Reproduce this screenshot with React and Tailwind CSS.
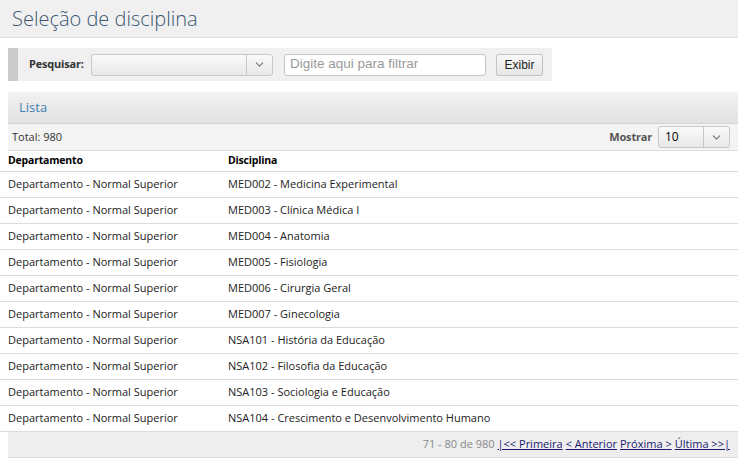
import { ChevronDown } from "lucide-react";

const rows = [
  "MED002 - Medicina Experimental",
  "MED003 - Clínica Médica I",
  "MED004 - Anatomia",
  "MED005 - Fisiologia",
  "MED006 - Cirurgia Geral",
  "MED007 - Ginecologia",
  "NSA101 - História da Educação",
  "NSA102 - Filosofia da Educação",
  "NSA103 - Sociologia e Educação",
  "NSA104 - Crescimento e Desenvolvimento Humano",
];

const sans = "font-['Open_Sans','Noto_Sans',sans-serif]";
const arial = "font-['Liberation_Sans',Arial,sans-serif]";

function SelectBox({ value, className }) {
  return (
    <div
      className={`flex h-[22px] items-stretch rounded-[3px] border border-[#c8c8c8] bg-gradient-to-b from-[#fafafa] to-[#e8e8e8] ${className}`}
    >
      <span className="flex flex-1 items-center px-1.5 text-[12px] text-black">
        {value}
      </span>
      <span className="flex w-[26px] items-center justify-center border-l border-[#c8c8c8] text-[#777]">
        <ChevronDown size={13} strokeWidth={2} />
      </span>
    </div>
  );
}

export default function App() {
  return (
    <div className={`min-h-screen bg-white text-[#222] ${sans}`}>
      <header className="flex h-[38px] items-center border-b border-[#dedede] bg-[#f0f0f0] px-3">
        <h1 className="text-[20px] font-light text-[#3c5670]">
          Seleção de disciplina
        </h1>
      </header>

      <div className="px-2 pt-[10px]">
        <div className="flex h-[33px] w-[544px] items-center bg-[#f0f0f0]">
          <span className="h-full w-[10px] bg-[#cbcbcb]" />
          <span className="ml-[11px] w-[52px] text-[11px] font-bold tracking-[-0.2px] text-[#333]">
            Pesquisar:
          </span>
          <SelectBox value="" className="ml-[10px] w-[182px]" />
          <div
            className={`ml-[11px] flex h-[22px] w-[202px] items-center rounded-[3px] border border-[#c4c4c4] bg-white px-[5px] text-[13.5px] text-[#999] ${arial}`}
          >
            Digite aqui para filtrar
          </div>
          <button
            type="button"
            className={`ml-[10px] h-[22px] w-[47px] rounded-[2px] border border-[#c4c4c4] bg-gradient-to-b from-[#f8f8f8] to-[#e6e6e6] text-[12px] text-[#222] ${arial}`}
          >
            Exibir
          </button>
        </div>
      </div>

      <section className="ml-2 mt-[11px]">
        <div className="flex h-[32px] items-center rounded-tl-[3px] border-b border-[#d4d4d4] bg-gradient-to-b from-[#f2f2f2] to-[#e2e2e2] px-[11px]">
          <span className="text-[13px] text-[#3f7fb5]">Lista</span>
        </div>

        <div className="flex h-[27px] items-center justify-between border-b border-[#dcdcdc] bg-[#f4f4f4] pl-1 pr-2">
          <span className="text-[11px] text-[#333]">Total: 980</span>
          <div className="flex items-center gap-[6px]">
            <span className="text-[11px] font-bold tracking-[-0.2px] text-[#555]">Mostrar</span>
            <SelectBox value="10" className="w-[72px]" />
          </div>
        </div>
      </section>

      <table className="w-full border-collapse text-[11px]">
        <thead>
          <tr className="h-[20px] border-b border-[#dcdcdc] text-left">
            <th className="w-[228px] pl-2 text-[10.5px] font-bold tracking-[-0.2px] text-black">
              Departamento
            </th>
            <th className="text-[10.5px] font-bold tracking-[-0.2px] text-black">Disciplina</th>
          </tr>
        </thead>
        <tbody>
          {rows.map((row) => (
            <tr key={row} className="h-[26px] border-b border-[#dcdcdc]">
              <td className="pl-2 text-[#222]">Departamento - Normal Superior</td>
              <td className="text-[#222]">{row}</td>
            </tr>
          ))}
        </tbody>
      </table>

      <div className="ml-2 flex h-[26px] items-center justify-end gap-[3px] border-b border-[#dcdcdc] bg-[#eeeeee] pr-2 text-[11px]">
        <span className="text-[#888]">71 - 80 de 980</span>
        <a className="text-[#1a1a70] underline">|&lt;&lt; Primeira</a>
        <a className="text-[#1a1a70] underline">&lt; Anterior</a>
        <a className="text-[#1a1a70] underline">Próxima &gt;</a>
        <a className="text-[#1a1a70] underline">Última &gt;&gt;|</a>
      </div>
    </div>
  );
}
